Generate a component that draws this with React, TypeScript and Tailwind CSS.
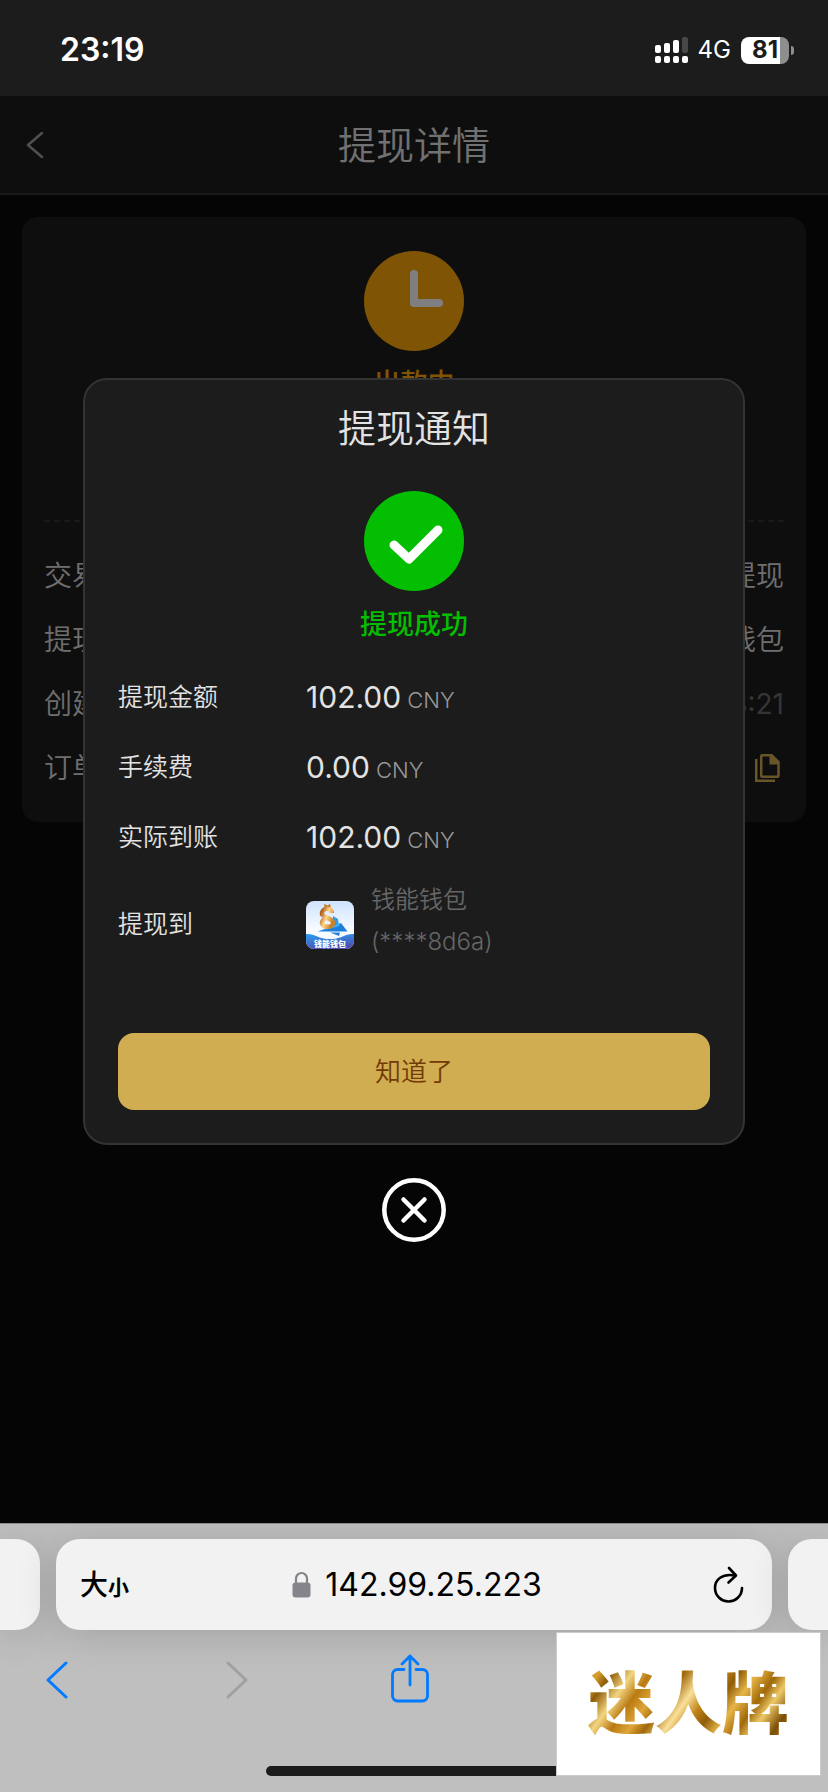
import { useState } from "react";
import type { ReactNode } from "react";

const amounts = [
  { label: "提现金额", value: "102.00" },
  { label: "手续费", value: "0.00" },
  { label: "实际到账", value: "102.00" },
];

function StatusBar() {
  return (
    <div className="flex h-24 shrink-0 items-center justify-between bg-[#1c1c1c] pr-[34px] pl-[60px] pt-1 text-white">
      <span className="text-[32px] leading-10 font-semibold">23:19</span>
      <div className="flex items-center">
        <svg className="h-[26px] w-[33px]" viewBox="0 0 33 26" fill="#fff">
          <rect x="0" y="8" width="6" height="8" rx="2" />
          <rect x="9" y="6" width="6" height="10" rx="2" />
          <rect x="18" y="3" width="6" height="13" rx="2" />
          <rect x="27" y="0" width="6" height="16" rx="2" fill="#484848" />
          <rect x="0" y="19" width="6" height="7" rx="2" />
          <rect x="9" y="19" width="6" height="7" rx="2" />
          <rect x="18" y="19" width="6" height="7" rx="2" />
          <rect x="27" y="19" width="6" height="7" rx="2" />
        </svg>
        <span className="ml-[10px] text-2xl">4G</span>
        <div className="ml-[10px] flex h-[27px] w-12 items-center justify-center rounded-lg bg-linear-to-r from-white from-81% to-[#8e8e8e] to-81%">
          <span className="text-2xl leading-none font-bold text-[#1c1c1c]">81</span>
        </div>
        <div className="ml-[2px] h-[9px] w-[3px] rounded-r-full bg-[#8e8e8e]" />
      </div>
    </div>
  );
}

function DetailRow({ label, children }: { label: string; children?: ReactNode }) {
  return (
    <div className="flex h-16 items-center justify-between text-[28px] text-[#dcdcdc]">
      <span className="font-[350]">{label}</span>
      {children}
    </div>
  );
}

function DetailPage() {
  return (
    <>
      <header className="grid h-[99px] grid-cols-[1fr_auto_1fr] items-center border-b-2 border-[#343434] bg-[#1c1c1c] px-[26px]">
        <button type="button" aria-label="返回" className="w-5">
          <svg className="h-7 w-[18px]" viewBox="0 0 18 28" fill="none" stroke="#a0a0a0" strokeWidth="2.5" strokeLinecap="round" strokeLinejoin="round">
            <path d="M16 2L2 14l14 12" />
          </svg>
        </button>
        <h1 className="text-[38px] leading-[56px] font-[350] text-[#e3e3e3]">提现详情</h1>
      </header>

      <section className="mx-[22px] mt-[22px] rounded-2xl bg-[#1c1c1c] px-[22px] pt-[34px] pb-[22px]">
        <div className="flex h-[269px] flex-col items-center">
          <svg className="size-[100px]" viewBox="0 0 100 100">
            <circle cx="50" cy="50" r="50" fill="#ffa908" />
            <path d="M50 23v29h25" fill="none" stroke="#fff" strokeWidth="8" strokeLinecap="round" strokeLinejoin="round" />
          </svg>
          <p className="mt-[13px] text-[27px] leading-10 font-medium text-[#ffa908]">出款中</p>
          <p className="mt-6 text-[38px] leading-[56px] text-[#e3e3e3]">102.00</p>
        </div>
        <div className="mb-[22px] border-t-2 border-dashed border-[#343434]" />
        <DetailRow label="交易类型"><span className="font-[350]">提现</span></DetailRow>
        <DetailRow label="提现方式"><span className="font-[350]">钱能钱包</span></DetailRow>
        <DetailRow label="创建时间"><span className="text-[#6b6b6b]">23:18:21</span></DetailRow>
        <DetailRow label="订单号">
          <button type="button" aria-label="复制" className="mr-1">
            <svg className="h-7 w-[25px]" viewBox="0 0 25 28" fill="none" stroke="#d0ad50" strokeWidth="2.5">
              <path d="M1.2 5v21.8H20" />
              <path d="M7.5 1.3h9.2l6.8 6.8v13.6a1 1 0 0 1-1 1H7.2a1 1 0 0 1-1-1V2.3a1 1 0 0 1 1-1z" />
              <path d="M14.5 1.3h2.8L24 8v2.5h-9.5z" fill="#d0ad50" stroke="none" />
            </svg>
          </button>
        </DetailRow>
      </section>
    </>
  );
}

function WalletLogo() {
  return (
    <svg className="size-12 shrink-0 rounded-lg" viewBox="0 0 48 48">
      <defs>
        <linearGradient id="walletSky" x1="0" y1="0" x2="0" y2="1">
          <stop offset="0" stopColor="#cfe3fd" />
          <stop offset="0.6" stopColor="#f8fbff" />
        </linearGradient>
        <linearGradient id="walletWave" x1="0" y1="0" x2="0.3" y2="1">
          <stop offset="0" stopColor="#2ba0f4" />
          <stop offset="1" stopColor="#4b50b4" />
        </linearGradient>
        <linearGradient id="walletGold" x1="0" y1="0" x2="1" y2="0.6">
          <stop offset="0" stopColor="#a85413" />
          <stop offset="0.5" stopColor="#ffd68a" />
          <stop offset="1" stopColor="#c9822c" />
        </linearGradient>
      </defs>
      <rect width="48" height="48" fill="url(#walletSky)" />
      <path d="M27 15l5 3 1 7-6 1z" fill="#2f9bea" />
      <path d="M12 30.5l23-8.5 6.5 8.5z" fill="#1d7fdc" />
      <path d="M12 30.5l20-5 3-3.5z" fill="#3fb2f5" />
      <path d="M24 31.5h10l-1 3.5z" fill="#2b7fd8" />
      <path d="M18 3l4 1.5 2-2 1 5.5h-6z" fill="#c57a26" />
      <path d="M26 12c0-5-9-6-10 0-1 5 11 4 11 10 0 5-10 5-11 0 0-3 3-4 5-6" fill="none" stroke="url(#walletGold)" strokeWidth="4.5" />
      <path d="M0 33c8-1 12 5 24 5s16-6 24-5v15H0z" fill="url(#walletWave)" />
      <text x="24" y="46" textAnchor="middle" fill="#fff" fontSize="8" fontWeight="900">钱能钱包</text>
    </svg>
  );
}

function NoticeModal({ onClose }: { onClose: () => void }) {
  return (
    <div className="absolute inset-0 flex flex-col items-center justify-center bg-black/50 px-[83px]">
      <div role="dialog" aria-modal="true" aria-labelledby="notice-title" className="w-full rounded-3xl border-2 border-[#333] bg-[#1c1c1c] px-[33px] pb-[33px]">
        <h2 id="notice-title" className="text-center text-[38px] leading-[97px] font-[350] text-[#e3e3e3]">提现通知</h2>
        <div className="mt-[14px] flex flex-col items-center">
          <svg className="size-[100px]" viewBox="0 0 100 100">
            <circle cx="50" cy="50" r="50" fill="#04be02" />
            <path d="M30 54l15 14 29-29" fill="none" stroke="#fff" strokeWidth="9" strokeLinecap="round" strokeLinejoin="round" />
          </svg>
          <p className="mt-[14px] text-[27px] leading-10 font-medium text-[#04be02]">提现成功</p>
        </div>

        <dl className="mt-[18px] text-2xl text-[#e3e3e3]">
          {amounts.map((row) => (
            <div key={row.label} className="flex h-[70px] items-center">
              <dt className="w-[188px] text-[25px] font-[350]">{row.label}</dt>
              <dd className="flex items-baseline gap-[6px]">
                <span className="text-[30px]">{row.value}</span>
                <span className="text-[22px] font-[350] text-[#999]">CNY</span>
              </dd>
            </div>
          ))}
          <div className="flex h-[104px] items-center">
            <dt className="w-[188px] text-[25px] font-[350]">提现到</dt>
            <dd className="flex items-center gap-[17px]">
              <WalletLogo />
              <span className="pb-2 leading-[42px] font-[350] text-[#666]">
                钱能钱包
                <br />
                (****8d6a)
              </span>
            </dd>
          </div>
        </dl>

        <button type="button" onClick={onClose} className="mt-14 h-[77px] w-full rounded-2xl bg-[#d0ad50] text-[26px] font-[350] text-[#733a08]">
          知道了
        </button>
      </div>

      <button type="button" aria-label="关闭" onClick={onClose} className="mt-[33px] shrink-0">
        <svg className="size-16" viewBox="0 0 64 64" fill="none" stroke="#fff" strokeWidth="4.5" strokeLinecap="round">
          <circle cx="32" cy="32" r="29.7" />
          <path d="M21.5 21.5l21 21M42.5 21.5l-21 21" />
        </svg>
      </button>
    </div>
  );
}

function BrowserBar() {
  return (
    <footer className="relative h-[269px] shrink-0 overflow-hidden border-t border-[#8c8c8c] bg-[#bfbfbf] pt-[15px]">
      <div className="flex h-[91px] gap-4">
        <div className="w-10 rounded-r-3xl bg-[#f2f2f2] shadow-[0_4px_40px_rgba(0,0,0,0.16)]" />
        <div className="grid flex-1 grid-cols-[1fr_auto_1fr] items-center rounded-3xl bg-[#f2f2f2] px-6 text-black shadow-[0_4px_40px_rgba(0,0,0,0.16)]">
          <button type="button" aria-label="页面设置" className="flex items-baseline font-medium">
            <span className="text-[28px]">大</span>
            <span className="text-[21px] font-bold">小</span>
          </button>
          <div className="flex items-center gap-[14px] pl-[6px]">
            <svg className="h-[27px] w-[19px]" viewBox="0 0 19 27">
              <path d="M4 13V7.5a5.5 5.5 0 0 1 11 0V13" fill="none" stroke="#85848a" strokeWidth="2.2" />
              <rect x="0.5" y="11.5" width="18" height="15" rx="3" fill="#85848a" />
            </svg>
            <span className="text-[32px]">142.99.25.223</span>
          </div>
          <button type="button" aria-label="重新加载" className="mr-1 justify-self-end">
            <svg className="h-[37px] w-[31px]" viewBox="0 0 31 37" fill="none" stroke="#000" strokeWidth="2.6" strokeLinecap="round" strokeLinejoin="round">
              <path d="M22 9.5C9 7 2 14 2 22a13.5 13.5 0 0 0 27 0" />
              <path d="M16 2l7 7.5-7.500 7" />
            </svg>
          </button>
        </div>
        <div className="w-10 rounded-l-3xl bg-[#f2f2f2] shadow-[0_4px_40px_rgba(0,0,0,0.16)]" />
      </div>

      <nav className="mt-6 flex h-[52px] items-center px-[37px]">
        <button type="button" aria-label="后退" className="flex w-10 justify-center">
          <svg className="h-[38px] w-6" viewBox="0 0 24 38" fill="none" stroke="#007aff" strokeWidth="3" strokeLinecap="round" strokeLinejoin="round">
            <path d="M21 2L3 19l18 17" />
          </svg>
        </button>
        <button type="button" aria-label="前进" disabled className="ml-[140px] flex w-10 justify-center">
          <svg className="h-[38px] w-6" viewBox="0 0 24 38" fill="none" stroke="#a0a0a0" strokeWidth="3" strokeLinecap="round" strokeLinejoin="round">
            <path d="M3 2l18 17L3 36" />
          </svg>
        </button>
        <button type="button" aria-label="分享" className="ml-[133px] flex w-10 justify-center pb-1">
          <svg className="h-[49px] w-[38px]" viewBox="0 0 38 49" fill="none" stroke="#007aff" strokeWidth="2.8" strokeLinecap="round" strokeLinejoin="round">
            <path d="M13 15.5H6.500a5 5 0 0 0-5 5V42a5 5 0 0 0 5 5h25a5 5 0 0 0 5-5V20.500a5 5 0 0 0-5-5H25" />
            <path d="M19 31V2M11 10l8-8 8 8" />
          </svg>
        </button>
      </nav>

      <div className="mx-auto mt-[60px] h-[10px] w-[296px] rounded-full bg-[#1c1c1c]" />

      {/* Brand stamp over the toolbar */}
      <div className="absolute right-[7px] bottom-4 flex h-[144px] w-[265px] items-center justify-center border border-[#ccc] bg-white">
        <span className="bg-[linear-gradient(125deg,#a87010_0%,#d9a02c_7%,#8f5c08_12%,#f3d580_20%,#b97a12_27%,#dfa63a_34%,#a06808_40%,#fae09a_48%,#c08418_55%,#8f5c08_61%,#e6b548_68%,#a06808_76%,#edc868_82%,#7d4f06_90%,#c08418_100%)] bg-clip-text text-[67px] leading-[84px] font-black text-transparent">
          迷人牌
        </span>
      </div>
    </footer>
  );
}

export default function App() {
  const [open, setOpen] = useState(true);

  return (
    <div lang="zh-CN" className="flex min-h-screen flex-col bg-[#0a0a0a] font-[Inter,'Noto_Sans_CJK_SC',sans-serif]">
      <StatusBar />
      <main className="relative flex-1">
        <DetailPage />
        {open && <NoticeModal onClose={() => setOpen(false)} />}
      </main>
      <BrowserBar />
    </div>
  );
}
